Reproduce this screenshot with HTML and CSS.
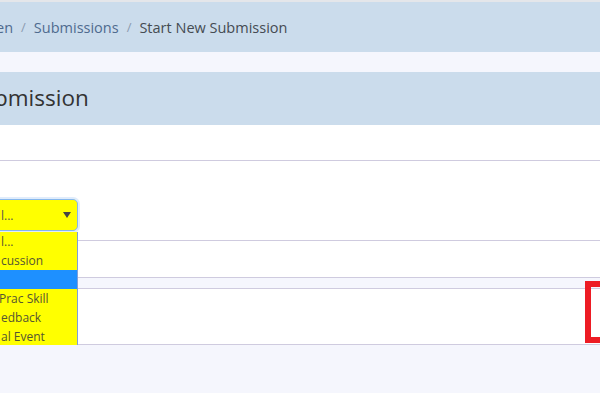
FILE: index.html
```html
<!DOCTYPE html>
<html lang="en">
<head>
    <meta charset="UTF-8">
    <meta name="viewport" content="width=device-width, initial-scale=1.0">
    <title>Start New Submission</title>
    <link rel="stylesheet" href="styles.css">
</head>
<body>
    <div class="topline"></div>

    <nav class="breadcrumb">
        <span class="crumb link first">en</span>
        <span class="sep">/</span>
        <span class="crumb link">Submissions</span>
        <span class="sep">/</span>
        <span class="crumb current">Start New Submission</span>
    </nav>

    <div class="panel">
        <div class="panel-header">
            <h1>bmission</h1>
        </div>
        <div class="panel-body">
            <div class="row row-top"></div>
            <div class="row row-select">
                <div class="select-wrap">
                    <div class="select">
                        <span class="select-text">l...</span>
                        <span class="caret"></span>
                    </div>
                    <ul class="options">
                        <li>l...</li>
                        <li>cussion</li>
                        <li class="active">&nbsp;</li>
                        <li class="cut">Prac Skill</li>
                        <li>edback</li>
                        <li>al Event</li>
                    </ul>
                </div>
            </div>
            <div class="row row-bottom"></div>
        </div>
    </div>

    <div class="panel-second">
        <div class="highlight"></div>
    </div>
</body>
</html>
```

FILE: styles.css
```css
body {
    margin: 0;
    background-color: #f5f6fd;
    font-family: 'Open Sans', 'Noto Sans', sans-serif;
    color: #333;
    overflow: hidden;
}
.topline {
    height: 2px;
    background-color: #e4e6ea;
}
.breadcrumb {
    height: 50px;
    background-color: #cbdcec;
    display: flex;
    align-items: center;
    gap: 8px;
    font-size: 14.5px;
    padding-left: 0;
}
.crumb.first {
    margin-left: -4px;
}
.crumb.link {
    color: #4f6b8f;
}
.crumb.current {
    color: #454b52;
}
.sep {
    color: #8b9bb0;
    font-size: 13px;
}
.panel {
    margin-top: 20px;
    background: white;
    border-bottom: 1px solid #cfcbdf;
}
.panel-header {
    height: 53px;
    background-color: #cbdcec;
    display: flex;
    align-items: center;
}
.panel-header h1 {
    margin: -2px 0 0 -6px;
    font-size: 22.5px;
    font-weight: 400;
    color: #333;
}
.row {
    border-bottom: 1px solid #cfcbdf;
}
.row-top {
    height: 35px;
}
.row-select {
    height: 80px;
    display: flex;
    align-items: flex-end;
    padding-bottom: 9px;
    box-sizing: border-box;
}
.row-bottom {
    height: 36px;
    border-bottom: none;
}
.select-wrap {
    position: relative;
    width: 160px;
    margin-left: -82px;
}
.select {
    height: 32px;
    box-sizing: border-box;
    background-color: #ffff00;
    border: 1px solid #86b7ec;
    border-radius: 5px;
    box-shadow: 0 0 0 2px rgba(130, 180, 240, 0.25);
    display: flex;
    align-items: center;
    justify-content: space-between;
    padding: 0 6px 0 82px;
    font-size: 12px;
    color: #555;
}
.caret {
    width: 0;
    height: 0;
    border-left: 4px solid transparent;
    border-right: 4px solid transparent;
    border-top: 6px solid #444;
}
.options {
    position: absolute;
    top: 33px;
    left: 0;
    right: 0;
    margin: 0;
    padding: 0;
    list-style: none;
    background-color: #ffff00;
    border: 1px solid #7f9fd9;
    border-top: none;
    font-size: 12px;
    color: #555533;
    z-index: 2;
}
.options li {
    height: 19px;
    line-height: 19px;
    padding-left: 82px;
    white-space: nowrap;
}
.options li.active {
    background-color: #1e90ff;
}
.options li.cut {
    text-indent: -2px;
}
.panel-second {
    position: relative;
    margin-top: 10px;
    height: 55px;
    background: white;
    border-top: 1px solid #cfcbdf;
    border-bottom: 1px solid #cfcbdf;
}
.highlight {
    position: absolute;
    left: 585px;
    top: -8px;
    width: 40px;
    height: 50px;
    border: 6px solid #ed1c24;
}
```
